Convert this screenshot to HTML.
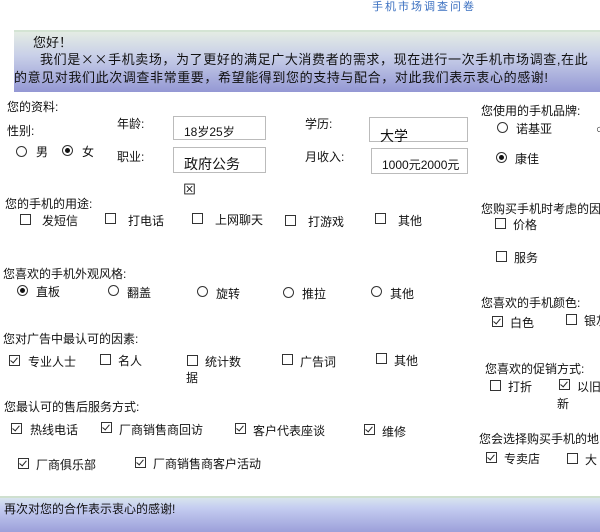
<!DOCTYPE html>
<html><head><meta charset="utf-8"><style>
body{margin:0;width:600px;height:530px;background:#fff;position:relative;overflow:hidden;font-family:"Liberation Sans","Noto Sans CJK SC",sans-serif;color:#111;font-size:12px}
.a{position:absolute;white-space:nowrap;line-height:14px}
.cb{position:absolute;width:9px;height:9px;border:1px solid #333;background:#fff}
.cb.k::after{content:"";position:absolute;left:2px;top:0px;width:3px;height:6px;border:solid #222;border-width:0 1.5px 1.5px 0;transform:rotate(40deg)}
.rb{position:absolute;width:9px;height:9px;border:1px solid #333;border-radius:50%;background:#fff}
.rb.k::after{content:"";position:absolute;left:2px;top:2px;width:5px;height:5px;border-radius:50%;background:#111}
.box{position:absolute;border:1px solid #bbb;background:#fff;font-size:13px;box-sizing:border-box}
.cj{font-family:"Noto Sans CJK SC",sans-serif}
</style></head><body>
<div class="a" style="left:372px;top:0px;color:#3a6fc0;font-size:11px;letter-spacing:2px">手机市场调查问卷</div>
<div style="position:absolute;left:14px;top:30px;width:586px;height:60px;background:linear-gradient(#e4ece4 0%,#c8cfe8 40%,#9498d4 100%);border-top:2px solid #d4e4d4"></div>
<div class="a" style="left:33px;top:36px;font-size:13px">您好！</div>
<div class="a" style="left:40px;top:52px;font-size:13px;letter-spacing:0.6px">我们是<span class="cj">××</span>手机卖场，为了更好的满足广大消费者的需求，现在进行一次手机市场调查,在此</div>
<div class="a" style="left:14px;top:71px;font-size:13px;letter-spacing:0.6px">的意见对我们此次调查非常重要，希望能得到您的支持与配合，对此我们表示衷心的感谢!</div>

<div class="a" style="left:7px;top:100px">您的资料:</div>
<div class="a" style="left:7px;top:124px">性别:</div>
<div class="rb" style="left:16px;top:146px"></div><div class="a" style="left:36px;top:145px">男</div>
<div class="rb k" style="left:62px;top:145px"></div><div class="a" style="left:82px;top:145px">女</div>
<div class="a" style="left:117px;top:117px">年龄:</div>
<div class="a" style="left:117px;top:150px">职业:</div>
<div class="box" style="left:173px;top:116px;width:93px;height:24px;padding:6px 0 0 10px;font-size:12px">18岁25岁</div>
<div class="box" style="left:173px;top:147px;width:93px;height:26px;padding:6px 0 0 10px;font-size:14px">政府公务</div>
<div class="a" style="left:183px;top:183px;font-size:13px">⊠</div>
<div class="a" style="left:305px;top:117px">学历:</div>
<div class="a" style="left:305px;top:150px">月收入:</div>
<div class="box" style="left:369px;top:117px;width:99px;height:25px;padding:8px 0 0 10px;font-size:14px">大学</div>
<div class="box" style="left:371px;top:148px;width:97px;height:26px;padding:7px 0 0 10px;font-size:12px">1000元2000元</div>

<div class="a" style="left:481px;top:104px">您使用的手机品牌:</div>
<div class="rb" style="left:497px;top:122px"></div><div class="a" style="left:516px;top:122px">诺基亚</div>
<div class="rb k" style="left:496px;top:152px"></div><div class="a" style="left:515px;top:152px">康佳</div>
<div class="a" style="left:596px;top:122px">○</div>

<div class="a" style="left:5px;top:197px">您的手机的用途:</div>
<div class="cb" style="left:20px;top:214px"></div><div class="a" style="left:42px;top:214px">发短信</div>
<div class="cb" style="left:105px;top:213px"></div><div class="a" style="left:128px;top:214px">打电话</div>
<div class="cb" style="left:192px;top:213px"></div><div class="a" style="left:215px;top:213px">上网聊天</div>
<div class="cb" style="left:285px;top:215px"></div><div class="a" style="left:308px;top:215px">打游戏</div>
<div class="cb" style="left:375px;top:213px"></div><div class="a" style="left:398px;top:214px">其他</div>

<div class="a" style="left:481px;top:202px">您购买手机时考虑的因</div>
<div class="cb" style="left:495px;top:218px"></div><div class="a" style="left:513px;top:218px">价格</div>
<div class="cb" style="left:496px;top:251px"></div><div class="a" style="left:514px;top:251px">服务</div>

<div class="a" style="left:3px;top:267px">您喜欢的手机外观风格:</div>
<div class="rb k" style="left:17px;top:285px"></div><div class="a" style="left:36px;top:285px">直板</div>
<div class="rb" style="left:108px;top:285px"></div><div class="a" style="left:127px;top:286px">翻盖</div>
<div class="rb" style="left:197px;top:286px"></div><div class="a" style="left:216px;top:287px">旋转</div>
<div class="rb" style="left:283px;top:287px"></div><div class="a" style="left:302px;top:287px">推拉</div>
<div class="rb" style="left:371px;top:286px"></div><div class="a" style="left:390px;top:287px">其他</div>

<div class="a" style="left:481px;top:296px">您喜欢的手机颜色:</div>
<div class="cb k" style="left:492px;top:316px"></div><div class="a" style="left:510px;top:316px">白色</div>
<div class="cb" style="left:566px;top:314px"></div><div class="a" style="left:584px;top:314px">银灰</div>

<div class="a" style="left:3px;top:332px">您对广告中最认可的因素:</div>
<div class="cb k" style="left:9px;top:355px"></div><div class="a" style="left:28px;top:355px">专业人士</div>
<div class="cb" style="left:100px;top:354px"></div><div class="a" style="left:118px;top:354px">名人</div>
<div class="cb" style="left:187px;top:355px"></div><div class="a" style="left:205px;top:355px">统计数</div>
<div class="a" style="left:186px;top:371px">据</div>
<div class="cb" style="left:282px;top:354px"></div><div class="a" style="left:300px;top:355px">广告词</div>
<div class="cb" style="left:376px;top:353px"></div><div class="a" style="left:394px;top:354px">其他</div>

<div class="a" style="left:485px;top:362px">您喜欢的促销方式:</div>
<div class="cb" style="left:490px;top:380px"></div><div class="a" style="left:508px;top:380px">打折</div>
<div class="cb k" style="left:559px;top:379px"></div><div class="a" style="left:577px;top:380px">以旧</div>
<div class="a" style="left:557px;top:397px">新</div>

<div class="a" style="left:4px;top:400px">您最认可的售后服务方式:</div>
<div class="cb k" style="left:11px;top:423px"></div><div class="a" style="left:30px;top:423px">热线电话</div>
<div class="cb k" style="left:101px;top:422px"></div><div class="a" style="left:119px;top:423px">厂商销售商回访</div>
<div class="cb k" style="left:235px;top:423px"></div><div class="a" style="left:253px;top:424px">客户代表座谈</div>
<div class="cb k" style="left:364px;top:424px"></div><div class="a" style="left:382px;top:425px">维修</div>

<div class="a" style="left:479px;top:432px">您会选择购买手机的地</div>
<div class="cb k" style="left:486px;top:452px"></div><div class="a" style="left:504px;top:452px">专卖店</div>
<div class="cb" style="left:567px;top:453px"></div><div class="a" style="left:585px;top:453px">大</div>

<div class="cb k" style="left:18px;top:458px"></div><div class="a" style="left:36px;top:458px">厂商俱乐部</div>
<div class="cb k" style="left:135px;top:457px"></div><div class="a" style="left:153px;top:457px">厂商销售商客户活动</div>

<div style="position:absolute;left:0;top:496px;width:600px;height:34px;background:linear-gradient(#d8e4ee 0%,#c4ccf0 30%,#9ca0da 100%);border-top:2px solid #cfe0cf"></div>
<div class="a" style="left:4px;top:502px">再次对您的合作表示衷心的感谢!</div>
</body></html>
